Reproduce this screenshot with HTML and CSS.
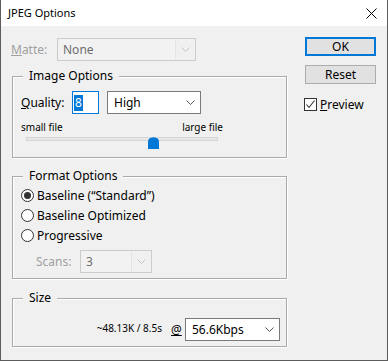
FILE: index.html
```html
<!DOCTYPE html>
<html lang="en">
<head>
    <meta charset="UTF-8">
    <title>JPEG Options</title>
    <link rel="stylesheet" href="styles.css">
</head>
<body>
    <div class="dialog">
        <!-- Title bar -->
        <div class="titlebar">
            <span class="title">JPEG Options</span>
            <svg class="close" width="11" height="11" viewBox="0 0 11 11">
                <path d="M0.5 0.5 L10.5 10.5 M10.5 0.5 L0.5 10.5" stroke="#000" stroke-width="1" fill="none"/>
            </svg>
        </div>

        <div class="content">
            <div class="main">
                <!-- Matte -->
                <div class="matte-row">
                    <span class="matte-label"><u>M</u>atte:</span>
                    <div class="combo combo-disabled matte-combo">
                        <span class="combo-field">None</span>
                        <span class="combo-arrow">
                            <svg width="9" height="5" viewBox="0 0 9 5"><polyline points="0.5,0.5 4.5,4.5 8.5,0.5" fill="none" stroke="#c4c4c4"/></svg>
                        </span>
                    </div>
                </div>

                <!-- Image Options -->
                <div class="group image-group">
                    <span class="group-title">Image Options</span>
                    <div class="quality-row">
                        <span class="quality-label"><u>Q</u>uality:</span>
                        <div class="quality-input"><span class="selected">8</span></div>
                        <div class="combo quality-combo">
                            <span class="combo-value">High</span>
                            <span class="combo-arrow">
                                <svg width="9" height="5" viewBox="0 0 9 5"><polyline points="0.5,0.5 4.5,4.5 8.5,0.5" fill="none" stroke="#555"/></svg>
                            </span>
                        </div>
                    </div>
                    <div class="slider-labels">
                        <span>small file</span>
                        <span>large file</span>
                    </div>
                    <div class="slider">
                        <div class="slider-track"></div>
                        <svg class="slider-thumb" width="11" height="12" viewBox="0 0 11 12">
                            <path d="M0 5 Q0 1.5 3 0.8 Q5.5 -0.4 8 0.8 Q11 1.5 11 5 V12 H0 Z" fill="#0078d7"/>
                        </svg>
                    </div>
                </div>

                <!-- Format Options -->
                <div class="group format-group">
                    <span class="group-title">Format Options</span>
                    <label class="radio-row">
                        <span class="radio checked"></span>
                        <span>Baseline (“Standard”)</span>
                    </label>
                    <label class="radio-row">
                        <span class="radio"></span>
                        <span>Baseline Optimized</span>
                    </label>
                    <label class="radio-row">
                        <span class="radio"></span>
                        <span>Progressive</span>
                    </label>
                    <div class="scans-row">
                        <span class="scans-label">Scans:</span>
                        <div class="combo combo-disabled scans-combo">
                            <span class="combo-field">3</span>
                            <span class="combo-arrow">
                                <svg width="9" height="5" viewBox="0 0 9 5"><polyline points="0.5,0.5 4.5,4.5 8.5,0.5" fill="none" stroke="#c4c4c4"/></svg>
                            </span>
                        </div>
                    </div>
                </div>

                <!-- Size -->
                <div class="group size-group">
                    <span class="group-title">Size</span>
                    <div class="size-row">
                        <span class="size-text">~48.13K / 8.5s</span>
                        <span class="at"><u>@</u></span>
                        <div class="combo speed-combo">
                            <span class="combo-value">56.6Kbps</span>
                            <span class="combo-arrow">
                                <svg width="9" height="5" viewBox="0 0 9 5"><polyline points="0.5,0.5 4.5,4.5 8.5,0.5" fill="none" stroke="#555"/></svg>
                            </span>
                        </div>
                    </div>
                </div>
            </div>

            <!-- Buttons -->
            <div class="side">
                <div class="button button-default">OK</div>
                <div class="button">Reset</div>
                <label class="check-row">
                    <span class="checkbox">
                        <svg width="11" height="11" viewBox="0 0 11 11"><polyline points="1.5,5.5 4,8.5 9.5,1.5" fill="none" stroke="#333" stroke-width="1.1"/></svg>
                    </span>
                    <span><u>P</u>review</span>
                </label>
            </div>
        </div>
    </div>
</body>
</html>
```

FILE: styles.css
```css
* {
    margin: 0;
    padding: 0;
    box-sizing: border-box;
}

body {
    font-family: "Noto Sans", "Segoe UI", sans-serif;
    font-size: 12px;
    color: #000;
    background: #f0f0f0;
}

.dialog {
    width: 388px;
    height: 361px;
    border: 1px solid #5c5c5c;
    border-top: none;
    background: #f0f0f0;
}

.titlebar {
    height: 26px;
    background: #fff;
    display: flex;
    align-items: center;
    justify-content: space-between;
    padding: 0 10px 0 7px;
}

.title {
    font-size: 11px;
    line-height: 16px;
}

.close {
    display: block;
}

.content {
    display: flex;
    padding-left: 11px;
}

.main {
    width: 275px;
}

/* combos */
.combo {
    display: flex;
    align-items: stretch;
    height: 23px;
    border: 1px solid #7a7a7a;
    background: #fff;
}

.combo-value {
    flex: 1;
    padding-left: 6px;
    line-height: 21px;
}

.combo-arrow {
    width: 19px;
    display: flex;
    align-items: center;
    justify-content: center;
}

.combo-disabled {
    border-color: #cccccc;
    background: #f0f0f0;
}

.combo-disabled .combo-field {
    flex: 1;
    margin: 1px 0 1px 1px;
    border-right: 1px solid #e3e3e3;
    padding-left: 4px;
    line-height: 19px;
    color: #6d6d6d;
    background: #f2f2f2;
}

/* matte */
.matte-row {
    display: flex;
    align-items: center;
    margin-top: 12px;
    margin-left: -1px;
}

.matte-label {
    width: 46px;
    color: #a0a0a0;
}

.matte-combo {
    width: 139px;
}

/* groups */
.group {
    position: relative;
    border: 1px solid #aaaaaa;
    box-shadow: inset 1px 1px 0 #fff, 1px 1px 0 #fff;
    padding-left: 8px;
}

.group-title {
    position: absolute;
    top: -9px;
    left: 10px;
    padding: 0 6px;
    background: #f0f0f0;
    line-height: 16px;
}

.image-group {
    margin-top: 15px;
    height: 82px;
    padding-top: 14px;
}

.quality-row {
    display: flex;
    align-items: center;
    height: 23px;
}

.quality-label {
    width: 51px;
}

.quality-input {
    width: 27px;
    height: 23px;
    border: 1px solid #0078d7;
    background: #fff;
    padding: 2px 0 0 1px;
}

.selected {
    display: inline-block;
    background: #0078d7;
    color: #fff;
    line-height: 16px;
    padding: 0 1px;
}

.quality-combo {
    width: 94px;
    margin-left: 8px;
}

.slider-labels {
    display: flex;
    justify-content: space-between;
    width: 202px;
    margin-top: 7px;
    font-size: 10px;
    line-height: 12px;
}

.slider {
    position: relative;
    width: 192px;
    height: 12px;
    margin: 4px 0 0 5px;
}

.slider-track {
    margin-top: 4px;
    height: 4px;
    background: #e7e7e7;
    border: 1px solid #d6d6d6;
}

.slider-thumb {
    position: absolute;
    top: 0;
    left: 122px;
}

/* format */
.format-group {
    margin-top: 18px;
    height: 103px;
    padding-top: 8px;
}

.radio-row {
    display: flex;
    align-items: center;
    gap: 3px;
    height: 20px;
}

.radio {
    width: 13px;
    height: 13px;
    border: 1px solid #333;
    border-radius: 50%;
    background: #fff;
    display: flex;
    align-items: center;
    justify-content: center;
}

.radio.checked::after {
    content: "";
    width: 7px;
    height: 7px;
    border-radius: 50%;
    background: #333;
}

.scans-row {
    display: flex;
    align-items: center;
    margin-top: 5px;
    padding-left: 15px;
}

.scans-label {
    width: 44px;
    color: #a0a0a0;
}

.scans-combo {
    width: 72px;
}

/* size */
.size-group {
    margin-top: 19px;
    height: 49px;
    padding: 19px 6px 0 0;
}

.size-row {
    display: flex;
    align-items: center;
    justify-content: flex-end;
}

.size-text {
    font-size: 10px;
    padding-bottom: 4px;
}

.at {
    margin-left: 9px;
    width: 14px;
}

.speed-combo {
    width: 95px;
}

/* side buttons */
.side {
    margin-left: 18px;
    width: 71px;
    padding-top: 11px;
}

.button {
    height: 19px;
    border: 1px solid #adadad;
    background: #e1e1e1;
    text-align: center;
    line-height: 17px;
    margin-bottom: 9px;
}

.button-default {
    border: 2px solid #0078d7;
    line-height: 15px;
}

.check-row {
    display: flex;
    align-items: center;
    gap: 3px;
    margin-top: 12px;
    margin-left: -1px;
}

.checkbox {
    width: 13px;
    height: 13px;
    border: 1px solid #333;
    background: #fff;
    display: flex;
    align-items: center;
    justify-content: center;
}
```
